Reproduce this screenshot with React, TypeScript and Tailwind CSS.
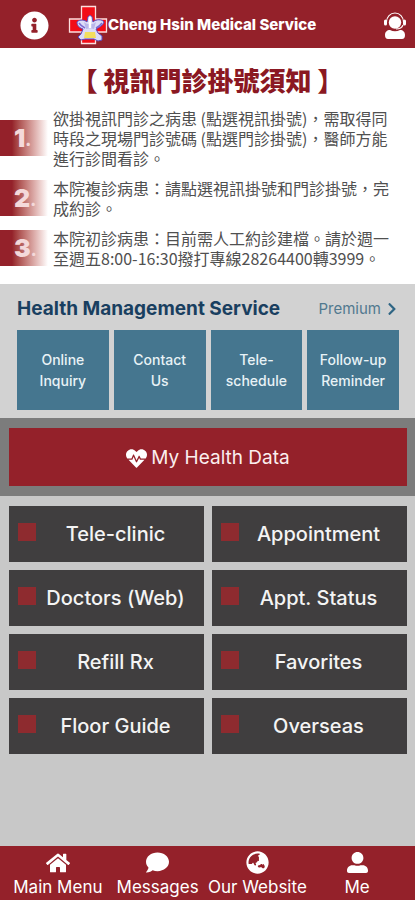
import { FaChevronRight, FaComment, FaGlobeAsia, FaHeartbeat, FaHome, FaInfoCircle, FaUserAlt } from "react-icons/fa";

const notices = [
  "欲掛視訊門診之病患 (點選視訊掛號)，需取得同\n時段之現場門診號碼 (點選門診掛號)，醫師方能\n進行診間看診。",
  "本院複診病患：請點選視訊掛號和門診掛號，完\n成約診。",
  "本院初診病患：目前需人工約診建檔。請於週一\n至週五8:00-16:30撥打專線28264400轉3999。",
];

const services = ["Online\nInquiry", "Contact\nUs", "Tele-\nschedule", "Follow-up\nReminder"];

const menuItems = ["Tele-clinic", "Appointment", "Doctors (Web)", "Appt. Status", "Refill Rx", "Favorites", "Floor Guide", "Overseas"];

const tabs = [
  { label: "Main Menu", icon: FaHome, size: "size-6" },
  { label: "Messages", icon: FaComment, size: "size-[23px]" },
  { label: "Our Website", icon: FaGlobeAsia, size: "size-[23px]" },
  { label: "Me", icon: FaUserAlt, size: "size-[21px]" },
];

function HospitalLogo() {
  return (
    <svg viewBox="0 0 40 40" className="size-10" role="img" aria-label="Cheng Hsin">
      <path d="M13.5 1.5h14v12.500h11v13h-11v11.500h-14V27h-12V14h12z" fill="#f20d17" stroke="#fbdede" strokeWidth="1.3" />
      <path
        d="M9 17c3-3 8-2 10 0l1-5c1-2 3-2 4 0l1 5c3-3 9-3 11 0-1 4-5 5-8 7l2 4 4 3v4l-4 1-4-2h-9l-4 1-3-3 3-3 2-5c-3-1-6-3-6-7z"
        fill="#dcdcf8"
        stroke="#5a4cc0"
        strokeWidth="1"
        strokeLinejoin="round"
      />
      <path d="M16 17c3 3 9 3 12 0l-2 7c-3-1-5-1-8 0z" fill="#b9b7ea" />
      <path d="M11 18c2 3 4 4 6 5m17-5c-2 3-4 4-6 5" fill="none" stroke="#7a6bd3" strokeWidth="1.5" />
      <path d="M22 12v11" stroke="#fff" strokeWidth="2.500" />
      <path d="M17 27h10l1 6H16z" fill="#f3df5e" />
    </svg>
  );
}

function AgentIcon() {
  return (
    <svg viewBox="0 0 24 28" className="h-7 w-6" fill="#fff" aria-hidden="true">
      <circle cx="12" cy="11.5" r="6.2" />
      <path d="M3.5 11a8.500 9 0 0 1 17 0M20 14c-1 3-3 4-7 4" fill="none" stroke="#fff" strokeWidth="1.1" />
      <rect x="1" y="8.5" width="3" height="6" rx="1.5" />
      <rect x="20" y="8.5" width="3" height="6" rx="1.5" />
      <path d="M7 19c3 1.600 7 1.600 10 0 3 0 5 2 5 5 0 2.500-1 4-3 4H5c-2 0-3-1.500-3-4 0-3 2-5 5-5z" />
    </svg>
  );
}

export default function App() {
  return (
    <div className="flex min-h-screen flex-col bg-[#c8c8c8] font-['Inter','Noto_Sans_CJK_TC',sans-serif]">
      <header className="flex h-12 items-center justify-between bg-[#94212a] pt-0.5 pr-2 pl-5 text-white">
        <div className="flex items-center">
          <button aria-label="Information" className="mr-[19px]">
            <FaInfoCircle className="size-[29px]" />
          </button>
          <HospitalLogo />
          <h1 className="text-[15px] font-extrabold whitespace-nowrap">Cheng Hsin Medical Service</h1>
        </div>
        <button aria-label="Customer service">
          <AgentIcon />
        </button>
      </header>

      <section lang="zh-Hant-TW" className="bg-white pb-4">
        <h2 className="pt-4 pb-3 text-center font-['Noto_Sans_CJK_TC',sans-serif] text-[26px] leading-8 font-black whitespace-nowrap text-[#8b1822]">
          【 視訊門診掛號須知 】
        </h2>
        <ol className="flex flex-col gap-[10px] font-['Noto_Sans_CJK_TC',sans-serif] text-base leading-5 text-[#505050]">
          {notices.map((notice, index) => (
            <li key={notice} className="flex items-center">
              <span className="mr-[5px] flex h-9 w-12 shrink-0 items-center bg-linear-to-r from-[#94212a] from-25% to-white pl-[14px] font-['Inter',sans-serif] text-[25px] leading-8 font-black text-[#f4d9da]">
                {index + 1}
                <span className="pt-1 text-base">.</span>
              </span>
              <p className="whitespace-pre">{notice}</p>
            </li>
          ))}
        </ol>
      </section>

      <section className="bg-[#d2d2d2] pt-3 pr-4 pb-2 pl-[17px]">
        <div className="flex h-[26px] items-center justify-between">
          <h2 className="text-[19px] font-bold text-[#193f60]">Health Management Service</h2>
          <a href="#premium" className="flex items-center gap-1 text-[15px] text-[#51798f]">
            Premium
            <FaChevronRight className="size-3.5 text-[#2f6584]" />
          </a>
        </div>
        <div className="mt-2 grid grid-cols-4 gap-[5px]">
          {services.map((service) => (
            <button key={service} className="h-20 bg-[#45768f] text-[14px] leading-[21px] font-medium whitespace-pre text-[#e8f2f6]">
              {service}
            </button>
          ))}
        </div>
      </section>

      <section className="bg-[#7c7c7c] py-[10px] pr-2 pl-[9px]">
        <button className="flex h-[58px] w-full items-center justify-center gap-1 bg-[#94212a] pt-0.5 text-[19px] text-[#fbeeee]">
          <FaHeartbeat className="size-[21px] text-white" />
          My Health Data
        </button>
      </section>

      <main className="grid grid-cols-2 gap-2 pt-[10px] pr-2 pl-[9px]">
        {menuItems.map((item) => (
          <button key={item} className="flex h-14 items-center bg-[#403e3f] px-[9px] text-[20px] font-medium text-[#f4f4f4]">
            <span className="mb-1 size-[18px] shrink-0 bg-[#8e2b2f]" />
            <span className="grow text-center">{item}</span>
          </button>
        ))}
      </main>

      <nav className="mt-auto flex h-[54px] bg-[#94212a] px-2 text-white">
        {tabs.map(({ label, icon: Icon, size }) => (
          <a key={label} href="#" className="flex flex-1 flex-col items-center pt-[5px] text-[17px] whitespace-nowrap">
            <span className="flex h-6 items-center">
              <Icon className={size} />
            </span>
            {label}
          </a>
        ))}
      </nav>
    </div>
  );
}
